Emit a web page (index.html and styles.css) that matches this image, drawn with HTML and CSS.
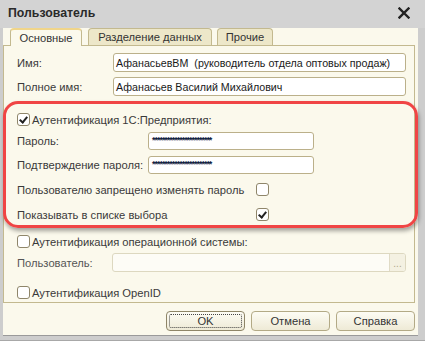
FILE: index.html
```html
<!DOCTYPE html>
<html lang="ru">
<head>
<meta charset="utf-8">
<title>Пользователь</title>
<link rel="stylesheet" href="styles.css">
</head>
<body>
<div class="window">
  <div class="titlebar">
    <span class="title">Пользователь</span>
    <svg class="close" width="12" height="12" viewBox="0 0 12 12"><path d="M1.5 1.5 L10.5 10.5 M10.5 1.5 L1.5 10.5" stroke="#222" stroke-width="2.4" stroke-linecap="square"/></svg>
  </div>
  <div class="client">
    <div class="tabs">
      <div class="tab active t1">Основные</div>
      <div class="tab t2">Разделение данных</div>
      <div class="tab t3">Прочие</div>
    </div>
    <div class="panel">
      <div class="row">
        <span class="label">Имя:</span>
        <div class="input wide">АфанасьевВМ &nbsp;(руководитель отдела оптовых продаж)</div>
      </div>
      <div class="row r2">
        <span class="label">Полное имя:</span>
        <div class="input wide">Афанасьев Василий Михайлович</div>
      </div>
      <div class="group">
        <div class="highlight"></div>
        <div class="row g1">
          <span class="check on"></span><span class="ctext">Аутентификация 1С:Предприятия:</span>
        </div>
        <div class="row g2">
          <span class="label lw2">Пароль:</span>
          <div class="input pass"><span class="stars">************************</span></div>
        </div>
        <div class="row g3">
          <span class="label lw2">Подтверждение пароля:</span>
          <div class="input pass"><span class="stars">************************</span></div>
        </div>
        <div class="row g4">
          <span class="label lw3">Пользователю запрещено изменять пароль</span>
          <span class="check"></span>
        </div>
        <div class="row g5">
          <span class="label lw3">Показывать в списке выбора</span>
          <span class="check on"></span>
        </div>
      </div>
      <div class="row o1">
        <span class="check"></span><span class="ctext">Аутентификация операционной системы:</span>
      </div>
      <div class="row o2">
        <span class="label lw4 dim">Пользователь:</span>
        <div class="input disabled"><span class="fill"></span><span class="dots">...</span></div>
      </div>
      <div class="sep"></div>
      <div class="row o3">
        <span class="check"></span><span class="ctext">Аутентификация OpenID</span>
      </div>
    </div>
    <div class="buttons">
      <div class="btn default"><span class="focus">OK</span></div>
      <div class="btn">Отмена</div>
      <div class="btn">Справка</div>
    </div>
  </div>
</div>
</body>
</html>
```
FILE: styles.css
```css
* { box-sizing: border-box; }
html, body { margin: 0; padding: 0; }
body {
  width: 425px;
  height: 341px;
  overflow: hidden;
  font-family: "Liberation Sans", Arial, sans-serif;
  font-size: 11.2px;
  color: #3a3a3a;
}
.window {
  width: 425px;
  height: 341px;
  background: #cdcdcd;
  display: flex;
  flex-direction: column;
  border-bottom: 1px solid #a8a8a8;
}
.titlebar {
  height: 28px;
  background: #d3d3d3;
  display: flex;
  align-items: center;
  justify-content: space-between;
  padding: 0 15px 2px 8px;
}
.title {
  font-weight: bold;
  font-size: 12.3px;
  color: #2a2a2a;
}
.close { display: block; }
.client {
  margin: 0 7px 0 3px;
  height: 308px;
  background: #fbf9ec;
  border-bottom: 1px solid #9a9a9a;
  display: flex;
  flex-direction: column;
}
.tabs {
  height: 17px;
  display: flex;
  align-items: flex-end;
  padding-left: 7px;
  position: relative;
  z-index: 1;
}
.tab {
  height: 17px;
  border: 1px solid #c3b98f;
  border-bottom: none;
  border-radius: 4px 4px 0 0;
  background: #ede7c9;
  display: flex;
  align-items: center;
  justify-content: center;
  color: #333;
}
.tab.active {
  background: #fbf9ec;
  height: 18px;
  margin-bottom: -1px;
  border-top: 2px solid #f0d58a;
}
.t1 { width: 72px; }
.t2 { width: 124px; margin-left: 6px; }
.t3 { width: 56px; margin-left: 5px; }
.panel {
  height: 258px;
  margin-right: 3px;
  border: 1px solid #c3b98f;
  padding: 7px 8px 0 13px;
  display: flex;
  flex-direction: column;
}
.row {
  height: 19px;
  display: flex;
  align-items: center;
  flex: none;
}
.r2 { margin-top: 5px; }
.label { width: 96px; flex: none; white-space: nowrap; }
.lw2 { width: 131px; }
.lw3 { width: 239px; }
.lw4 { width: 95px; }
.dim { color: #555; }
.input {
  height: 19px;
  border: 1px solid #bbb08a;
  border-radius: 3px;
  background: #fff;
  padding: 0 2px;
  display: flex;
  align-items: center;
  white-space: nowrap;
  overflow: hidden;
  color: #1a1a1a;
  font-size: 10.7px;
}
.wide { width: 295px; }
.pass { width: 166px; height: 18px; align-items: flex-start; padding: 0 3px; }
.stars {
  font-size: 9px;
  letter-spacing: -1.03px;
  line-height: 10px;
  margin-top: 2px;
  color: #102040;
  font-weight: bold;
}
.disabled {
  width: 295px;
  border-color: #ddd8c0;
  background: #fdfcf6;
  padding: 0;
}
.disabled .fill { flex: 1; }
.dots {
  width: 16px;
  height: 100%;
  border-left: 1px solid #e0dbc6;
  background: #f4f1e2;
  color: #b0a88a;
  font-size: 10px;
  display: flex;
  align-items: center;
  justify-content: center;
  padding-top: 2px;
}
.check {
  width: 13px;
  height: 13px;
  border: 1px solid #8f866a;
  border-radius: 3px;
  background: #fff;
  flex: none;
  position: relative;
}
.check.on::after {
  content: "";
  position: absolute;
  left: 3px;
  top: 1px;
  width: 3px;
  height: 6px;
  border: solid #222;
  border-width: 0 2px 2px 0;
  transform: rotate(40deg);
}
.ctext { margin-left: 2px; white-space: nowrap; }
.group { position: relative; }
.g1 { margin-top: 14px; }
.g2 { margin-top: 2px; }
.g3 { margin-top: 5px; }
.g4 { margin-top: 6px; }
.g5 { margin-top: 6px; }
.highlight {
  position: absolute;
  left: -14px;
  right: -12px;
  top: 5px;
  bottom: -4px;
  border: 3px solid #f04545;
  border-radius: 15px;
  box-shadow: 1px 3px 4px rgba(0,0,0,0.35);
  pointer-events: none;
}
.o1 { margin-top: 8px; }
.o2 { margin-top: 2px; }
.sep {
  height: 1px;
  background: #c6bd98;
  margin: 6px 0 0 0;
  width: 391px;
}
.o3 { margin-top: 5px; }
.buttons {
  display: flex;
  justify-content: flex-end;
  gap: 6px;
  padding: 8px 3px 0 0;
}
.btn {
  width: 79px;
  height: 20px;
  border: 1px solid #b3aa86;
  border-radius: 4px;
  background: linear-gradient(#fdfcf4, #eeead6);
  display: flex;
  align-items: center;
  justify-content: center;
  color: #333;
}
.btn.default { border-color: #8e8567; padding: 2px; }
.focus {
  flex: 1;
  align-self: stretch;
  border: 1px dotted #444;
  border-radius: 2px;
  display: flex;
  align-items: center;
  justify-content: center;
}
```
